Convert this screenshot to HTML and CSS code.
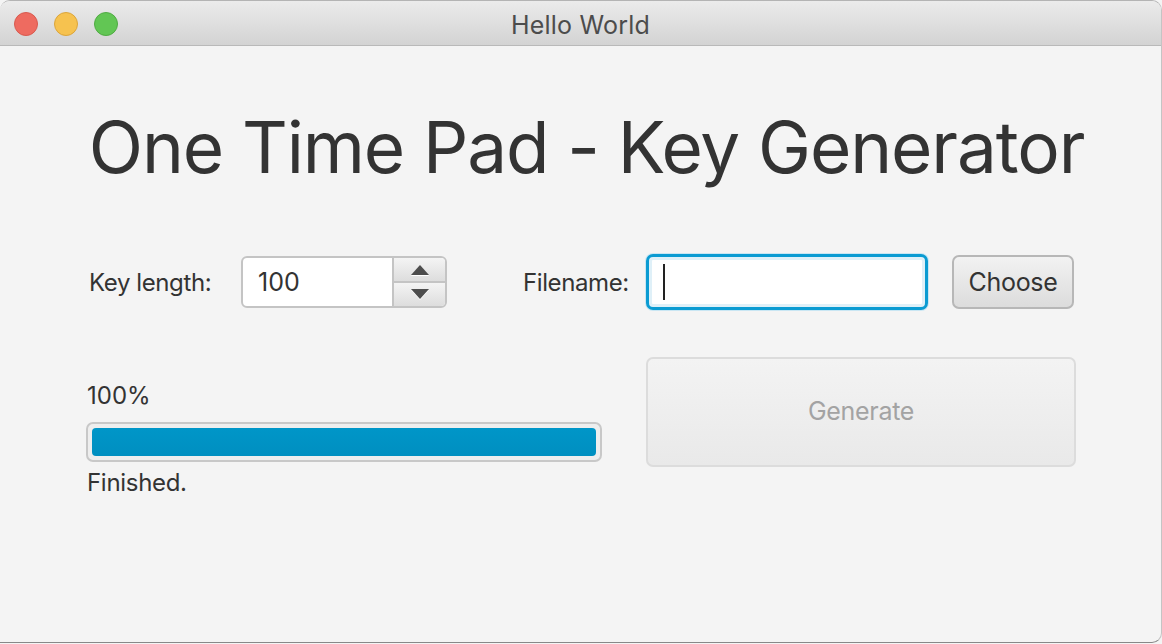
FILE: index.html
```html
<!DOCTYPE html>
<html>
<head>
<meta charset="utf-8">
<title>Hello World</title>
<link rel="stylesheet" href="styles.css">
</head>
<body>
<div class="window">
  <div class="titlebar">
    <div class="lights">
      <span class="light red"></span>
      <span class="light yellow"></span>
      <span class="light green"></span>
    </div>
    <div class="wtitle">Hello World</div>
  </div>
  <div class="content">
    <h1 class="heading">One Time Pad - Key Generator</h1>
    <div class="row1">
      <label class="lbl lbl-key">Key length:</label>
      <div class="spinner">
        <div class="spin-value">100</div>
        <div class="spin-buttons">
          <div class="spin-btn up"><span class="arrow arrow-up"></span></div>
          <div class="spin-btn down"><span class="arrow arrow-down"></span></div>
        </div>
      </div>
      <label class="lbl lbl-file">Filename:</label>
      <div class="field"><span class="caret"></span></div>
      <div class="btn choose">Choose</div>
    </div>
    <div class="row2">
      <div class="progress-col">
        <div class="pct">100%</div>
        <div class="bar"><div class="bar-fill" style="width:100%"></div></div>
        <div class="status">Finished.</div>
      </div>
      <div class="btn generate">Generate</div>
    </div>
  </div>
</div>
</body>
</html>
```
FILE: styles.css
```css
html, body {
  margin: 0;
  padding: 0;
  background: #f4f4f4;
}
body {
  width: 1162px;
  height: 644px;
  overflow: hidden;
  font-family: Inter, "Noto Sans", sans-serif;
  color: #333333;
}
.window {
  box-sizing: border-box;
  width: 1162px;
  height: 643px;
  background: #f4f4f4;
  border-top: 1px solid #b4b4b4;
  border-right: 1px solid #c4c4c4;
  border-bottom: 1px solid #888888;
  border-radius: 10px 10px 10px 0;
  overflow: hidden;
  display: flex;
  flex-direction: column;
}
.titlebar {
  position: relative;
  height: 44px;
  flex: none;
  background: linear-gradient(#ebebeb, #d3d3d3);
  border-bottom: 1px solid #b9b9b9;
  display: flex;
  align-items: center;
  justify-content: center;
}
.lights {
  position: absolute;
  left: 14px;
  top: 11px;
  display: flex;
  gap: 16px;
}
.light {
  box-sizing: border-box;
  width: 24px;
  height: 24px;
  border-radius: 50%;
}
.red { background: #ee6b60; border: 1px solid #d85a4f; }
.yellow { background: #f6c24f; border: 1px solid #dba53b; }
.green { background: #62c654; border: 1px solid #50ab43; }
.wtitle {
  font-size: 25px;
  color: #4c4c4c;
  letter-spacing: 0.2px;
  padding-top: 4px;
}
.content {
  flex: 1;
  display: flex;
  flex-direction: column;
}
.heading {
  margin: 0;
  padding-top: 51px;
  height: 100px;
  text-align: center;
  font-weight: 400;
  font-size: 71px;
  line-height: 100px;
  letter-spacing: -1.1px;
  color: #333333;
  padding-left: 12px;
}
.row1 {
  margin-top: 57px;
  display: flex;
  align-items: center;
  padding-left: 89px;
  height: 56px;
}
.lbl {
  font-size: 24px;
  letter-spacing: -0.4px;
  color: #333;
}
.lbl-key { width: 152px; }
.lbl-file { width: 123px; margin-left: 76px; }
.spinner {
  box-sizing: border-box;
  width: 206px;
  height: 52px;
  border: 2px solid #c4c4c4;
  border-radius: 6px;
  display: flex;
  overflow: hidden;
  background: #ffffff;
}
.spin-value {
  flex: 1;
  font-size: 25px;
  padding-left: 15px;
  display: flex;
  align-items: center;
  color: #333;
}
.spin-buttons {
  width: 51px;
  border-left: 2px solid #c4c4c4;
  display: flex;
  flex-direction: column;
}
.spin-btn {
  flex: 1;
  background: linear-gradient(#f4f4f4, #dddddd);
  display: flex;
  align-items: center;
  justify-content: center;
}
.spin-btn.up { border-bottom: 2px solid #c4c4c4; }
.arrow {
  width: 0;
  height: 0;
  border-left: 9px solid transparent;
  border-right: 9px solid transparent;
}
.arrow-up {
  border-bottom: 10px solid #4d4d4d;
  filter: drop-shadow(0 1px 0 #ffffff);
  margin-top: 1px;
}
.arrow-down {
  border-top: 10px solid #4d4d4d;
  filter: drop-shadow(0 1px 0 #ffffff);
  margin-bottom: 1px;
}
.field {
  box-sizing: border-box;
  width: 282px;
  height: 56px;
  border-radius: 7px;
  background: #ffffff;
  border: 3px solid #0a9bd2;
  box-shadow: 0 0 0 1px #c9e6f3, inset 0 0 0 3px #dff0f8;
  display: flex;
  align-items: center;
  padding-left: 14px;
}
.caret {
  width: 2px;
  height: 36px;
  background: #222;
}
.btn {
  box-sizing: border-box;
  display: flex;
  align-items: center;
  justify-content: center;
  border-radius: 7px;
}
.choose {
  margin-left: 24px;
  width: 122px;
  height: 54px;
  border: 2px solid #b7b7b7;
  background: linear-gradient(#f2f2f2, #dcdcdc);
  font-size: 25px;
  letter-spacing: -0.3px;
  color: #333;
}
.row2 {
  margin-top: 47px;
  display: flex;
  padding-left: 86px;
  gap: 44px;
}
.progress-col {
  width: 516px;
  padding-top: 24px;
  display: flex;
  flex-direction: column;
}
.pct {
  font-size: 24px;
  line-height: 30px;
  padding-left: 1px;
}
.bar {
  box-sizing: border-box;
  margin-top: 11px;
  height: 40px;
  border: 2px solid #c8c8c8;
  border-radius: 7px;
  background: #eeeeee;
  padding: 4px;
}
.bar-fill {
  height: 100%;
  border-radius: 4px;
  background: linear-gradient(#0096c8, #008fc0);
}
.status {
  font-size: 24px;
  line-height: 30px;
  margin-top: 6px;
  padding-left: 1px;
  letter-spacing: -0.3px;
}
.generate {
  width: 430px;
  height: 110px;
  border: 2px solid #dcdcdc;
  background: linear-gradient(#f3f3f3, #e9e9e9);
  font-size: 25px;
  letter-spacing: -0.3px;
  color: #a3a3a3;
  padding-bottom: 2px;
}
```
